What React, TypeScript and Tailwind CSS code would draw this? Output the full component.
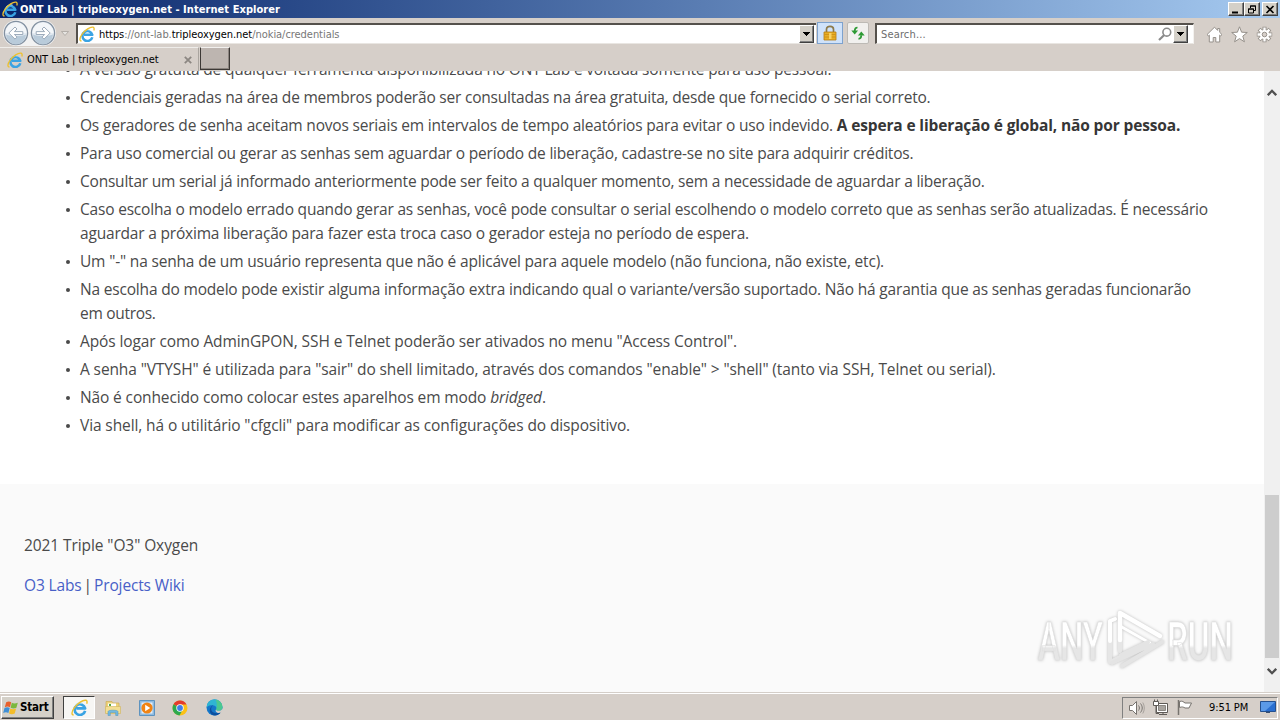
import type { ReactNode } from "react";

const RAISED =
  "border border-t-white border-l-white border-r-[#404040] border-b-[#404040] bg-[#d4d0c8] shadow-[inset_-1px_-1px_0_#808080]";

/* ── List entries: one or more lines each, with its own tracking ── */
const NOTES: { lines: { text: ReactNode; track: string }[] }[] = [
  {
    lines: [
      {
        text: "A versão gratuita de qualquer ferramenta disponibilizada no ONT Lab é voltada somente para uso pessoal.",
        track: "tracking-[-0.174px]",
      },
    ],
  },
  {
    lines: [
      {
        text: "Credenciais geradas na área de membros poderão ser consultadas na área gratuita, desde que fornecido o serial correto.",
        track: "tracking-[-0.211px]",
      },
    ],
  },
  {
    lines: [
      {
        text: (
          <>
            Os geradores de senha aceitam novos seriais em intervalos de tempo aleatórios para evitar o uso indevido.{" "}
            <strong className="font-bold tracking-[-0.14px] text-[#363636]">
              A espera e liberação é global, não por pessoa.
            </strong>
          </>
        ),
        track: "tracking-[-0.187px]",
      },
    ],
  },
  {
    lines: [
      {
        text: "Para uso comercial ou gerar as senhas sem aguardar o período de liberação, cadastre-se no site para adquirir créditos.",
        track: "tracking-[-0.2px]",
      },
    ],
  },
  {
    lines: [
      {
        text: "Consultar um serial já informado anteriormente pode ser feito a qualquer momento, sem a necessidade de aguardar a liberação.",
        track: "tracking-[-0.217px]",
      },
    ],
  },
  {
    lines: [
      {
        text: "Caso escolha o modelo errado quando gerar as senhas, você pode consultar o serial escolhendo o modelo correto que as senhas serão atualizadas. É necessário",
        track: "tracking-[-0.197px]",
      },
      {
        text: "aguardar a próxima liberação para fazer esta troca caso o gerador esteja no período de espera.",
        track: "tracking-[-0.192px]",
      },
    ],
  },
  {
    lines: [
      {
        text: 'Um "-" na senha de um usuário representa que não é aplicável para aquele modelo (não funciona, não existe, etc).',
        track: "tracking-[-0.175px]",
      },
    ],
  },
  {
    lines: [
      {
        text: "Na escolha do modelo pode existir alguma informação extra indicando qual o variante/versão suportado. Não há garantia que as senhas geradas funcionarão",
        track: "tracking-[-0.182px]",
      },
      { text: "em outros.", track: "tracking-[-0.3px]" },
    ],
  },
  {
    lines: [
      {
        text: 'Após logar como AdminGPON, SSH e Telnet poderão ser ativados no menu "Access Control".',
        track: "tracking-[-0.107px]",
      },
    ],
  },
  {
    lines: [
      {
        text: 'A senha "VTYSH" é utilizada para "sair" do shell limitado, através dos comandos "enable" > "shell" (tanto via SSH, Telnet ou serial).',
        track: "tracking-[-0.112px]",
      },
    ],
  },
  {
    lines: [
      {
        text: (
          <>
            Não é conhecido como colocar estes aparelhos em modo <em>bridged</em>.
          </>
        ),
        track: "tracking-[-0.13px]",
      },
    ],
  },
  {
    lines: [
      {
        text: 'Via shell, há o utilitário "cfgcli" para modificar as configurações do dispositivo.',
        track: "tracking-[-0.108px]",
      },
    ],
  },
];

/* ── Icons ── */
function IeIcon({ className }: { className: string }) {
  return (
    <svg viewBox="0 0 16 16" className={className} fill="none">
      <path
        d="M13.3 11.2A5 5 0 1 1 13.3 8.800H5"
        stroke="#3aa3e3"
        strokeWidth="2.500"
        strokeLinejoin="round"
      />
      <path d="M4.400 6C5.600 3.900 8.300 3.300 10.600 4.100" stroke="#a5dcf8" strokeWidth="1" />
      <path
        d="M2.600 14.900C.2 15.300.4 12 3.200 8.200 6.200 4 11.200.6 14 1.200c1.200.3 1.400 1.600.8 3.200"
        stroke="#eec02e"
        strokeWidth="1.300"
      />
    </svg>
  );
}

function NavArrow({ flip = false }: { flip?: boolean }) {
  return (
    <svg viewBox="0 0 26 26" className={flip ? "size-[26px] -scale-x-100" : "size-[26px]"}>
      <circle cx="13" cy="13" r="11.6" fill="#e3eaf1" stroke="#8290a0" strokeWidth="1.3" />
      <path d="M2.5 13a10.5 10.5 0 0 1 21 0z" fill="#f3f6f9" />
      <path d="M3 14.5a10 10 0 0 0 20 0c-6 2-14 2-20 0z" fill="#b9cbda" />
      <path
        d="M5.800 13l6.200-6 2 2-2.600 2.600h8.400v2.900h-8.400l2.600 2.600-2 2z"
        fill="#fff"
        stroke="#93a3b3"
        strokeWidth=".9"
      />
    </svg>
  );
}

function DropButton() {
  return (
    <span className={`flex h-[18px] w-[15px] items-center justify-center ${RAISED}`}>
      <svg viewBox="0 0 7 4" className="h-1 w-[7px]" shapeRendering="crispEdges">
        <path d="M0 0h7L3.5 4z" fill="#000" />
      </svg>
    </span>
  );
}

function WindowButton({ children, className = "" }: { children: ReactNode; className?: string }) {
  return (
    <span className={`flex h-[14px] w-4 items-center justify-center ${RAISED} ${className}`}>
      <svg viewBox="0 0 10 9" className="h-[9px] w-[10px]" fill="none" stroke="#000">
        {children}
      </svg>
    </span>
  );
}

function TitleBar() {
  return (
    <header className="flex h-[18px] items-center bg-linear-to-r from-[#0a246a] to-[#a6caf0] pr-0.5 pl-[2px]">
      <IeIcon className="size-4" />
      <span className="ml-0.5 text-[11px] leading-none font-bold tracking-[0.06px] whitespace-nowrap text-white">
        ONT Lab | tripleoxygen.net - Internet Explorer
      </span>
      <div className="ml-auto flex">
        <WindowButton>
          <path d="M1 7.5h6" strokeWidth="2" />
        </WindowButton>
        <WindowButton>
          <path d="M3.500 3V1h5v4.500H7M3 1h6M1.500 4h5v4h-5zM1 4h6" />
        </WindowButton>
        <WindowButton className="ml-0.5">
          <path d="M1.500 1l7 7M8.500 1l-7 7" strokeWidth="1.600" />
        </WindowButton>
      </div>
    </header>
  );
}

function AddressRow() {
  return (
    <div className="flex h-[29px] items-center pt-px">
      <div className="ml-[3px] flex w-[53px] items-center rounded-full bg-[#f2f2f2]">
        <NavArrow />
        <span className="ml-px">
          <NavArrow flip />
        </span>
      </div>
      <svg viewBox="0 0 8 5" className="ml-[5px] h-[5px] w-2">
        <path d="M.5.5h7L4 4.500z" fill="#e6e4e1" stroke="#aaa59e" strokeWidth=".8" />
      </svg>
      <div className="ml-[7px] flex h-[21px] w-[740px] items-center border-t-2 border-l-2 border-[#55514c] border-b border-b-[#e9e6e2] bg-white pl-px">
        <IeIcon className="size-4" />
        <span className="ml-1 pt-px text-[11px] leading-none tracking-[-0.05px] whitespace-nowrap text-[#777]">
          <span className="text-black">https</span>://ont-lab.<span className="text-black">tripleoxygen.net</span>
          /nokia/credentials
        </span>
        <span className="mr-0.5 ml-auto">
          <DropButton />
        </span>
      </div>
      <span className="ml-px flex h-[22px] w-[26px] items-center justify-center border border-[#7da2ce] bg-[#cfe2fa]">
        <svg viewBox="0 0 14 16" className="h-4 w-3.5">
          <path d="M3.500 8V4.200C3.500.4 10.500.4 10.500 4.200V8" fill="none" stroke="#8d7a4a" strokeWidth="1.700" />
          <path d="M1 7h12v8H1z" fill="#e8ae25" stroke="#b57b12" strokeWidth=".8" />
          <path d="M1.500 9.500h11M1.500 12h11" stroke="#c98b18" strokeWidth=".8" />
          <path d="M6 8h2.500v6H6z" fill="#f8d264" />
        </svg>
      </span>
      <span className="ml-1 flex h-[22px] w-[22px] items-center justify-center rounded-xs border border-[#bdbab5] bg-[#f1f0ee]">
        <svg viewBox="0 0 14 14" className="size-3.5" fill="none" stroke="#2d9a34" strokeWidth="1.700">
          <path d="M6.500 1.500C4.500 1.500 3.700 3 3.700 5" />
          <path d="M.3 4.500h6.800L3.700 8.500z" fill="#2d9a34" stroke="none" />
          <path d="M7.500 12.800c2 0 2.800-1.500 2.800-3.500" />
          <path d="M6.900 9.500h6.800l-3.400-4z" fill="#2d9a34" stroke="none" />
        </svg>
      </span>
      <div className="ml-[6px] flex h-[21px] w-[319px] items-center border-t-2 border-r border-b border-l-2 border-[#55514c] border-r-[#f4f2ef] border-b-[#e9e6e2] bg-white pl-1">
        <span className="pt-px text-[11px] leading-none tracking-[0.15px] text-[#6d6d6d]">Search...</span>
        <svg viewBox="0 0 14 14" className="ml-auto size-3.5" fill="none" stroke="#8a8a8a">
          <circle cx="8.800" cy="5.200" r="3.900" strokeWidth="1.600" />
          <path d="M6 8.200L1 13" strokeWidth="2.200" />
        </svg>
        <span className="mr-[5px] ml-px">
          <DropButton />
        </span>
      </div>
      <div className="mr-[7px] ml-auto flex items-center gap-2 pt-[3px]">
        <svg viewBox="0 0 17 17" className="size-[17px]" fill="#fff" stroke="#96918b">
          <path d="M8.500 1.200L1 8.600l1.400 1.300.9-.8V16h3.900v-4.500h2.600V16h3.900V9.100l.9.800L16 8.600l-2.300-2.300V2.500h-2v1.900z" />
        </svg>
        <svg viewBox="0 0 17 17" className="size-[17px]" fill="#fff" stroke="#96918b">
          <path d="M8.500.8l2.100 5.400 5.700.3-4.500 3.600 1.600 5.700-4.900-3.200-4.900 3.200 1.600-5.700L.7 6.500l5.700-.3z" />
        </svg>
        <svg viewBox="0 0 17 17" className="size-[17px]" fill="none">
          <g stroke="#96918b" strokeWidth="4">
            <path d="M8.500.8v15.400M.8 8.500h15.400M3.100 3.100l10.800 10.800M13.900 3.100L3.100 13.900" />
          </g>
          <g stroke="#fff" strokeWidth="2.300">
            <path d="M8.500 1.500v14M1.500 8.500h14M3.600 3.600l9.800 9.800M13.400 3.600l-9.800 9.800" />
          </g>
          <circle cx="8.500" cy="8.500" r="4.600" fill="#fff" />
          <circle cx="8.500" cy="8.500" r="2.300" fill="#d6cfc9" stroke="#96918b" />
        </svg>
      </div>
    </div>
  );
}

function TabRow() {
  return (
    <div className="flex h-6">
      <div className="flex w-[199px] items-center border-t border-r border-[#efedea] border-r-[#aaa59f] pl-[7px]">
        <IeIcon className="size-4" />
        <span className="ml-1 text-[11px] leading-none tracking-[-0.06px] whitespace-nowrap text-black">
          ONT Lab | tripleoxygen.net
        </span>
        <svg viewBox="0 0 8 8" className="mr-[6px] ml-auto size-2" stroke="#8c8782" strokeWidth="1.800">
          <path d="M.8.8l6.400 6.400M7.200.8L.8 7.200" />
        </svg>
      </div>
      <span className="ml-px h-[23px] w-[30px] border border-t-[#f2f0ee] border-r-[#3c3835] border-b-[#3c3835] border-l-[#3c3835] bg-[#bdb5b0] shadow-[inset_-1px_-1px_0_#8c8580]" />
    </div>
  );
}

function ScrollBar() {
  return (
    <div className="flex w-4 flex-col items-center bg-[#f0f0f0]">
      <svg viewBox="0 0 10 7" className="mt-[18px] h-[7px] w-[10px]" fill="none" stroke="#505050" strokeWidth="2.300">
        <path d="M.8 6.200L5 1.800l4.200 4.400" />
      </svg>
      <div className="mt-[399px] h-[163px] w-[14px] bg-[#cdcdcd]" />
      <svg viewBox="0 0 10 7" className="mt-[10px] h-[7px] w-[10px]" fill="none" stroke="#505050" strokeWidth="2.300">
        <path d="M.8.8L5 5.200 9.200.8" />
      </svg>
    </div>
  );
}

/* ── Faint ANY ▷ RUN mark over the footer ── */
function Watermark() {
  return (
    <svg
      viewBox="0 0 200 64"
      className="absolute top-[608px] left-[1036px] h-16 w-[200px] drop-shadow-[0_0_1.5px_rgba(0,0,0,0.25)]"
    >
      <defs>
        <linearGradient id="mark" x1="0" y1="0" x2="0" y2="1">
          <stop offset="0.55" stopColor="#ffffff" />
          <stop offset="0.6" stopColor="#e6e6e6" />
        </linearGradient>
      </defs>
      <g className="[font-family:Roboto,sans-serif] text-[53px] font-medium" fill="url(#mark)" stroke="#dedede" strokeWidth=".6">
        <text x="2" y="52" textLength="65" lengthAdjust="spacingAndGlyphs">
          ANY
        </text>
        <text x="131" y="52" textLength="66" lengthAdjust="spacingAndGlyphs">
          RUN
        </text>
      </g>
      <g fill="none" strokeLinejoin="round" strokeLinecap="round">
        <path d="M74 34v20l12-6M84 43V32" stroke="#e6e6e6" strokeWidth="4" />
        <path d="M74 33V13l5-2" stroke="#fff" strokeWidth="4" />
        <path d="M84 32V5l40 23" stroke="#fff" strokeWidth="4.500" />
        <path d="M84 18l30 17" stroke="#fff" strokeWidth="3" />
        <path d="M126 34L86 58M117 36L76 55M112 34L85 47" stroke="#e4e4e4" strokeWidth="4" />
      </g>
    </svg>
  );
}

function Page() {
  return (
    <main className="flex h-[621px] overflow-hidden bg-white">
      <div className="flex flex-1 flex-col overflow-hidden text-[15.5px] leading-6 text-[#4a4a4a] [font-family:'Open_Sans',sans-serif]">
        <ul className="-mt-[14px] flex h-[427px] shrink-0 flex-col gap-1 pl-[66px]">
          {NOTES.map((note, i) => (
            <li key={i} className="flex">
              <span className="mt-[11px] mr-[10px] size-1 shrink-0 rounded-full bg-[#4a4a4a]" />
              <div>
                {note.lines.map((line, j) => (
                  <p key={j} className={`whitespace-nowrap ${line.track}`}>
                    {line.text}
                  </p>
                ))}
              </div>
            </li>
          ))}
        </ul>
        <footer className="flex-1 bg-[#fafafa] px-6 pt-[49px]">
          <p className="tracking-[-0.09px]">2021 Triple "O3" Oxygen</p>
          <p className="mt-4 flex tracking-[-0.14px]">
            <a className="text-[#485fc7]">O3 Labs</a>
            <span className="w-[12.500px] text-center">|</span>
            <a className="text-[#485fc7]">Projects Wiki</a>
          </p>
        </footer>
      </div>
      <ScrollBar />
    </main>
  );
}

/* ── Taskbar ── */
function WindowsFlag() {
  return (
    <svg viewBox="0 0 16 16" className="size-4">
      <path d="M3.200 2.300c2-1.200 3.500-1 5 0L7 7.200c-1.600-1-3.400-1-5.200 0z" fill="#e8602c" />
      <path d="M8.800 2.700c1.700 1 3.600 1 6 0l-1.400 5c-2 1-3.900.9-5.800 0z" fill="#7bb83e" />
      <path d="M1.500 8c1.800-1 3.600-1 5.200 0l-1.300 5.100c-1.600-1-3.400-1-5.200 0z" fill="#3f8fd6" />
      <path d="M7.300 8.500c1.800.9 3.700.9 5.800 0l-1.400 5c-2 1-3.900.9-5.700 0z" fill="#f4bd2a" />
    </svg>
  );
}

function Taskbar() {
  return (
    <footer className="flex h-7 items-center border-t border-[#d4cec8] shadow-[inset_0_1px_0_#fff]">
      <div className={`mt-0.5 ml-px flex h-[23px] w-[53px] items-center pl-px ${RAISED}`}>
        <WindowsFlag />
        <span className="ml-px text-[11.500px] leading-none font-bold tracking-[-0.2px] text-black">Start</span>
      </div>
      <div className="mt-0.5 ml-[9px] flex h-[23px] w-8 items-center justify-center border border-t-[#404040] border-r-white border-b-white border-l-[#404040] bg-[#f7f6f4]">
        <IeIcon className="size-[17px]" />
      </div>
      <svg viewBox="0 0 18 18" className="mt-0.5 ml-[9px] size-[18px]">
        <path d="M2 2.500h6l1 1.500h6v10H2z" fill="#edd27a" stroke="#c9a94e" strokeWidth=".6" />
        <path d="M4 4.500h8v4H4z" fill="#fff" />
        <path d="M5 5h2v2H5z" fill="#58a947" />
        <path d="M1.500 7.500h15v7h-15z" fill="#f3de92" stroke="#d0b45e" strokeWidth=".6" />
        <path d="M4 16.500v-4c0-1.800 10-1.800 10 0v4h-2.300v-3H6.300v3z" fill="#72b9e2" stroke="#4b92bd" strokeWidth=".5" />
      </svg>
      <svg viewBox="0 0 18 18" className="mt-0.5 ml-4 size-[18px]">
        <path d="M1.500 1.500h15v15h-15z" fill="#8fbbe0" stroke="#5e93bf" />
        <path d="M3.500 3.500h11v11h-11z" fill="#e4effa" />
        <circle cx="9" cy="9" r="5.600" fill="#f08313" />
        <path d="M7.200 5.800l5 3.200-5 3.200z" fill="#fff" />
      </svg>
      <svg viewBox="0 0 16 16" className="mt-0.5 ml-4 size-4">
        <circle cx="8" cy="8" r="7.500" fill="#fbc116" />
        <path d="M8 8L1.500 4.250A7.500 7.500 0 0 1 14.500 4.500H8z" fill="#e33b2e" />
        <path d="M8 8L1.500 4.250A7.500 7.500 0 0 0 7.500 15.500l3-5.500z" fill="#2da94f" />
        <circle cx="8" cy="8" r="3.700" fill="#fff" />
        <circle cx="8" cy="8" r="2.900" fill="#3f7ee8" />
      </svg>
      <svg viewBox="0 0 16 16" className="mt-0.5 ml-[18px] size-[17px]">
        <circle cx="8" cy="8" r="7.500" fill="#1577c9" />
        <path d="M.5 8A7.500 7.500 0 0 1 15.500 7.500c0 2.800-2 3.600-3.800 3.600-1.500 0-2.500-.7-2.200-1.200.8-1 .5-3.600-2.300-3.900C4.500 5.700 2 6 .5 8z" fill="#2fb5d2" />
        <path d="M9 .6c4 .4 6.500 3.600 6.500 6.900 0 2.800-2 3.600-3.800 3.600-1.500 0-2.500-.7-2.200-1.200C10.500 8 10.500 3 9 .6z" fill="#55cf79" opacity=".75" />
        <path d="M9.500 9.900c-.3.500.7 1.200 2.200 1.200 1.500 0 3-.5 3.600-2l.7 2-2.200 2C10.500 14 8 11.500 9.500 9.900z" fill="#d6cfc9" />
        <path d="M5.200 10.900C6.400 13.400 10.200 14.200 13.800 12.800 10 17.500 4 15.500 3.500 11c0-2.500 1.500-4.500 3.500-5.300-1.800 1-2.600 3.300-1.800 5.200z" fill="#0d4f9e" />
      </svg>
      <div className="mt-0.5 mr-0.5 ml-auto flex h-[22px] w-[156px] items-center border border-t-[#808080] border-r-white border-b-white border-l-[#808080] pl-[5px]">
        <svg viewBox="0 0 18 16" className="h-4 w-[18px]" fill="none" stroke="#77736f">
          <path d="M1.500 5.500h3L8.500 1.500v13l-4-4h-3z" fill="#fff" />
          <path d="M10.500 5.500c1.200 1.500 1.200 3.500 0 5M12.500 3.500c2.300 2.800 2.300 6.200 0 9" />
          <path d="M14.800 2.500c2 3.300 2 7.700 0 11" opacity=".5" />
        </svg>
        <svg viewBox="0 0 17 17" className="ml-[6px] size-[17px]" fill="none" stroke="#5f5b57">
          <path d="M4.500 4.500h11v9h-11z" fill="#fff" />
          <path d="M6.500 6.500h7v5h-7z" fill="#a8a49f" stroke="#8b8782" />
          <path d="M7 15.500h8M11 13.500v2" />
          <path d="M1.500 2.500h5v4h-5z" fill="#fff" />
          <path d="M2.500.500v2M5.500.500v2M4 6.500v8h3" />
        </svg>
        <svg viewBox="0 0 17 17" className="ml-[7px] size-[17px]" fill="none" stroke="#77736f">
          <path d="M2.500 1v15" strokeWidth="1.500" />
          <path d="M3.500 2.500c3-1 4 .5 5.500 1.500h6.500L13 9H9C7.500 8 6 7.500 3.500 8.500z" fill="#fff" />
        </svg>
        <span className="ml-[16px] text-[11px] leading-none tracking-[-0.1px] whitespace-nowrap text-black">
          9:51 PM
        </span>
        <svg viewBox="0 0 16 13" className="mr-px ml-auto h-[13px] w-4">
          <path d="M.5.500h15v10H.500z" fill="#2a6fd0" stroke="#24508f" />
          <path d="M1 1h14L5 10H1z" fill="#5b9ae8" />
          <path d="M6 11h4v1H6z" fill="#3a4f70" />
        </svg>
      </div>
    </footer>
  );
}

export default function App() {
  return (
    <div className="relative flex h-[720px] w-[1280px] flex-col overflow-hidden bg-[#d6cfc9] [font-family:'DejaVu_Sans_Condensed','DejaVu_Sans',sans-serif]">
      <TitleBar />
      <AddressRow />
      <TabRow />
      <Page />
      <Taskbar />
      <Watermark />
    </div>
  );
}
